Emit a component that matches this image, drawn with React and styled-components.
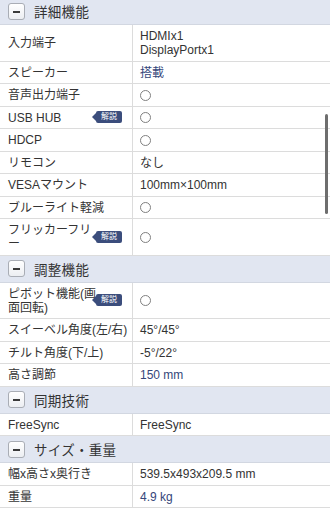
import React from "react";
import styled, { createGlobalStyle } from "styled-components";

const GlobalStyle = createGlobalStyle`
  html, body {
    margin: 0;
    padding: 0;
    background: #fff;
    overflow: hidden;
  }
  body {
    font-family: "Liberation Sans", "Noto Sans CJK JP", sans-serif;
    color: #333;
  }
`;

const sections = [
  {
    title: "詳細機能",
    rows: [
      { label: "入力端子", value: ["HDMIx1", "DisplayPortx1"] },
      { label: "スピーカー", value: "搭載", link: true },
      { label: "音声出力端子", circle: true },
      { label: "USB HUB", circle: true, note: true },
      { label: "HDCP", circle: true },
      { label: "リモコン", value: "なし" },
      { label: "VESAマウント", value: "100mm×100mm" },
      { label: "ブルーライト軽減", circle: true },
      { label: "フリッカーフリー", circle: true, note: true },
    ],
  },
  {
    title: "調整機能",
    rows: [
      { label: "ピボット機能(画面回転)", circle: true, note: true },
      { label: "スイーベル角度(左/右)", value: "45°/45°" },
      { label: "チルト角度(下/上)", value: "-5°/22°" },
      { label: "高さ調節", value: "150 mm", link: true },
    ],
  },
  {
    title: "同期技術",
    rows: [{ label: "FreeSync", value: "FreeSync" }],
  },
  {
    title: "サイズ・重量",
    rows: [
      { label: "幅x高さx奥行き", value: "539.5x493x209.5 mm" },
      { label: "重量", value: "4.9 kg", link: true },
    ],
  },
];

function App() {
  return (
    <>
      <GlobalStyle />
      <Page>
        {sections.map((section) => (
          <section key={section.title}>
            <Header>
              <Toggle />
              <HeaderTitle>{section.title}</HeaderTitle>
            </Header>
            {section.rows.map((row) => (
              <Row key={row.label}>
                <Label>
                  <LabelText $note={row.note}>{row.label}</LabelText>
                  {row.note && <Note>解説</Note>}
                </Label>
                <Value $link={row.link}>
                  {row.circle && <Circle />}
                  {Array.isArray(row.value)
                    ? row.value.map((line) => <div key={line}>{line}</div>)
                    : row.value}
                </Value>
              </Row>
            ))}
          </section>
        ))}
      </Page>
      <ScrollThumb />
    </>
  );
}

export default App;

const Page = styled.div`
  margin-top: -2px;
  width: 330px;
`;

const Header = styled.div`
  display: flex;
  align-items: center;
  gap: 9px;
  height: 26px;
  padding-left: 8px;
  background: #e1e6f1;
  border-bottom: 1px solid #d2d7e1;
`;

const Toggle = styled.span`
  position: relative;
  width: 15px;
  height: 15px;
  border: 1px solid #a9adb5;
  border-radius: 3px;
  background: linear-gradient(#ffffff, #eceef2);

  &::after {
    content: "";
    position: absolute;
    left: 4px;
    right: 4px;
    top: 7px;
    height: 2px;
    background: #3a3a3a;
  }
`;

const HeaderTitle = styled.span`
  font-size: 13.5px;
  color: #333;
  letter-spacing: 0.3px;
`;

const Row = styled.div`
  display: grid;
  grid-template-columns: 133px 1fr;
  border-bottom: 1px solid #dcdcdc;
  font-size: 12px;
  line-height: 14px;
`;

const Label = styled.div`
  position: relative;
  display: flex;
  align-items: center;
  padding: 4px 4px 3.5px 8px;
  border-right: 1px solid #dcdcdc;
`;

const LabelText = styled.span`
  width: ${(p) => (p.$note ? "90px" : "auto")};
  white-space: ${(p) => (p.$note ? "normal" : "nowrap")};
  line-break: anywhere;
`;

const Note = styled.span`
  position: absolute;
  right: 10px;
  top: 50%;
  transform: translateY(-50%);
  width: 26px;
  height: 12px;
  border-radius: 2px;
  background: #3b4d7c;
  color: #fff;
  font-size: 8px;
  line-height: 12px;
  text-align: center;

  &::before {
    content: "";
    position: absolute;
    left: -4px;
    top: 2px;
    border-style: solid;
    border-width: 4px 4px 4px 0;
    border-color: transparent #3b4d7c transparent transparent;
  }
`;

const Value = styled.div`
  display: flex;
  flex-direction: column;
  justify-content: center;
  padding: 4px 0 3.5px 7px;
  color: ${(p) => (p.$link ? "#35467a" : "#333")};
`;

const Circle = styled.span`
  width: 9px;
  height: 9px;
  border: 1px solid #808080;
  border-radius: 50%;
`;

const ScrollThumb = styled.div`
  position: fixed;
  top: 114px;
  right: 2px;
  width: 3px;
  height: 100px;
  border-radius: 2px;
  background: #6e6e6e;
`;
